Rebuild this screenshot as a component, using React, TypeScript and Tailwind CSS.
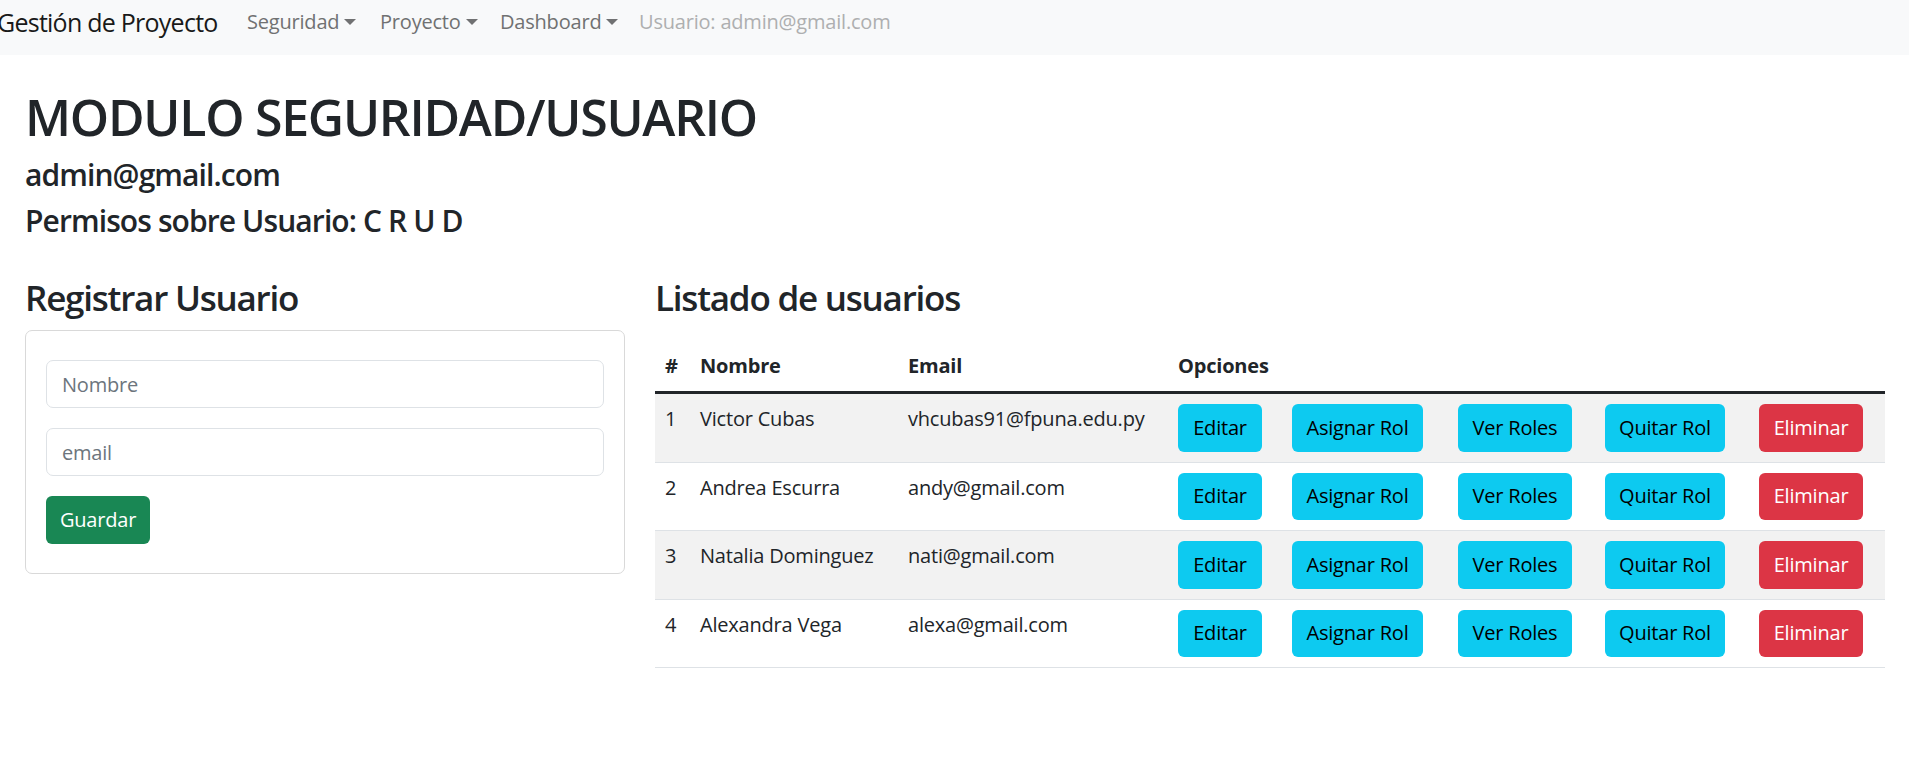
import { useState } from 'react'

const USERS = [
  { id: 1, nombre: 'Victor Cubas', email: 'vhcubas91@fpuna.edu.py' },
  { id: 2, nombre: 'Andrea Escurra', email: 'andy@gmail.com' },
  { id: 3, nombre: 'Natalia Dominguez', email: 'nati@gmail.com' },
  { id: 4, nombre: 'Alexandra Vega', email: 'alexa@gmail.com' }
]

const NAV_LINKS = [
  { label: 'Seguridad', width: 'w-[133px]' },
  { label: 'Proyecto', width: 'w-[120px]' },
  { label: 'Dashboard', width: 'w-[139px]' }
]

function Caret() {
  return (
    <span className="inline-block w-0 h-0 ml-[5px] align-[4px] border-t-[6px] border-x-[6px] border-x-transparent" />
  )
}

export default function App() {
  const [nombre, setNombre] = useState('')
  const [email, setEmail] = useState('')

  return (
    <div className="min-h-screen bg-white text-[#212529] text-[20px] leading-[30px] tracking-[-0.01em] font-['Open_Sans',sans-serif]">
      {/* Navbar */}
      <nav className="h-[55px] bg-[#f8f9fa] pb-[11px] flex items-center whitespace-nowrap">
        <a className="w-[240px] -ml-[3px] text-[25px] leading-[37px] tracking-[-0.03em] text-[#191919]">Gestión de Proyecto</a>
        {NAV_LINKS.map((link) => (
          <a key={link.label} className={`${link.width} px-[10px] text-[#707172]`}>
            {link.label}
            <Caret />
          </a>
        ))}
        <span className="px-[10px] text-[#aeafb0]">Usuario: admin@gmail.com</span>
      </nav>

      <div className="pl-[25px] pr-[24px] pt-[32px]">
        <h1 className="text-[50px] leading-[60px] font-semibold tracking-[-0.025em] mb-[10px]">MODULO SEGURIDAD/USUARIO</h1>
        <h4 className="text-[30px] leading-[36px] font-semibold tracking-[-0.03em] mb-[10px]">admin@gmail.com</h4>
        <h4 className="text-[30px] leading-[36px] font-semibold tracking-[-0.03em]">Permisos sobre Usuario: C R U D</h4>

        <div className="flex gap-[30px] mt-[38px]">
          {/* Registrar */}
          <div className="w-[600px] shrink-0">
            <h3 className="text-[35px] leading-[42px] font-semibold tracking-[-0.035em] mb-[11px]">Registrar Usuario</h3>
            <div className="border border-[#d9d9d9] rounded-[7px] px-[20px] pt-[29px] pb-[29px]">
              <input
                type="text"
                value={nombre}
                onChange={(e) => setNombre(e.target.value)}
                placeholder="Nombre"
                className="block w-full h-[48px] px-[15px] mb-[20px] border border-[#dee2e6] rounded-[7px] placeholder-[#6c757d] outline-none"
              />
              <input
                type="text"
                value={email}
                onChange={(e) => setEmail(e.target.value)}
                placeholder="email"
                className="block w-full h-[48px] px-[15px] mb-[20px] border border-[#dee2e6] rounded-[7px] placeholder-[#6c757d] outline-none"
              />
              <button className="w-[104px] h-[47.5px] rounded-[6px] bg-[#198754] text-white">Guardar</button>
            </div>
          </div>

          {/* Listado */}
          <div className="flex-1">
            <h3 className="text-[35px] leading-[42px] font-semibold tracking-[-0.035em] mb-[22px]">Listado de usuarios</h3>
            <table className="w-full table-fixed border-collapse">
              <colgroup>
                <col className="w-[35px]" />
                <col className="w-[208px]" />
                <col className="w-[270px]" />
                <col className="w-[114px]" />
                <col className="w-[166px]" />
                <col className="w-[147px]" />
                <col className="w-[154px]" />
                <col className="w-[136px]" />
              </colgroup>
              <thead>
                <tr>
                  <th className="p-[10px] text-left font-bold border-b-[3px] border-[#212529]">#</th>
                  <th className="p-[10px] text-left font-bold border-b-[3px] border-[#212529]">Nombre</th>
                  <th className="p-[10px] text-left font-bold border-b-[3px] border-[#212529]">Email</th>
                  <th colSpan={5} className="p-[10px] text-left font-bold border-b-[3px] border-[#212529]">Opciones</th>
                </tr>
              </thead>
              <tbody>
                {USERS.map((u, i) => (
                  <tr key={u.id} className={i % 2 === 0 ? 'bg-[#f2f2f2]' : 'bg-white'}>
                    <td className="p-[10px] align-top border-b border-[#dee2e6]">{u.id}</td>
                    <td className="p-[10px] align-top border-b border-[#dee2e6] whitespace-nowrap">{u.nombre}</td>
                    <td className="p-[10px] align-top border-b border-[#dee2e6] whitespace-nowrap">{u.email}</td>
                    <td className="p-[10px] align-top border-b border-[#dee2e6]">
                      <button className="w-[84px] h-[47.5px] rounded-[6px] bg-[#0dcaf0] text-black">Editar</button>
                    </td>
                    <td className="p-[10px] align-top border-b border-[#dee2e6]">
                      <button className="w-[131px] h-[47.5px] rounded-[6px] bg-[#0dcaf0] text-black whitespace-nowrap">Asignar Rol</button>
                    </td>
                    <td className="p-[10px] align-top border-b border-[#dee2e6]">
                      <button className="w-[114px] h-[47.5px] rounded-[6px] bg-[#0dcaf0] text-black whitespace-nowrap">Ver Roles</button>
                    </td>
                    <td className="p-[10px] align-top border-b border-[#dee2e6]">
                      <button className="w-[120px] h-[47.5px] rounded-[6px] bg-[#0dcaf0] text-black whitespace-nowrap">Quitar Rol</button>
                    </td>
                    <td className="p-[10px] align-top border-b border-[#dee2e6]">
                      <button className="w-[104px] h-[47.5px] rounded-[6px] bg-[#dc3545] text-white">Eliminar</button>
                    </td>
                  </tr>
                ))}
              </tbody>
            </table>
          </div>
        </div>
      </div>
    </div>
  )
}
